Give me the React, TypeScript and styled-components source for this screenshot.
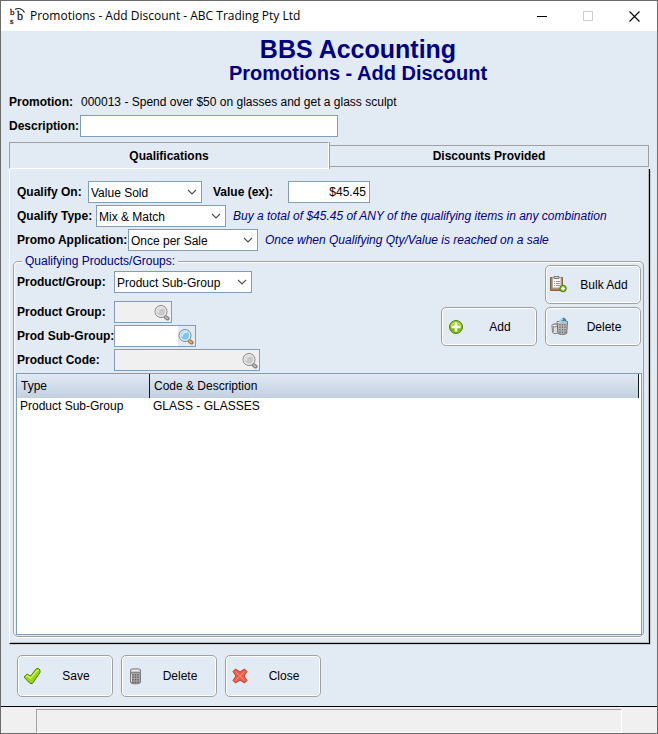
import React, { useState } from "react";
import styled, { createGlobalStyle, css } from "styled-components";

const face = "#e2eaf4";
const line = "#a0a0a0";
const fieldLine = "#7f9db9";
const navy = "#000080";

const GlobalStyle = createGlobalStyle`
  *, *::before, *::after { box-sizing: border-box; }
  body {
    margin: 0;
    background: ${face};
    color: #000;
    font: 12px/16px "Liberation Sans", Arial, sans-serif;
  }
  button, input, select { font: inherit; color: inherit; margin: 0; border-radius: 0; }
`;

const Window = styled.div`
  display: flex;
  flex-direction: column;
  min-height: 100vh;
  border: 1px solid #6b6b6b;
  background: ${face};
`;

const TitleBar = styled.header`
  display: flex;
  align-items: center;
  height: 30px;
  padding-left: 8px;
  background: #fff;
  font: 12px/16px "Open Sans", "Segoe UI", sans-serif;
`;

const TitleText = styled.span`
  flex: 1;
  padding-left: 4px;
  white-space: nowrap;
`;

const CaptionButton = styled.button`
  display: grid;
  place-items: center;
  width: 46px;
  height: 30px;
  padding: 0;
  border: 0;
  background: none;
`;

const Body = styled.main`
  display: flex;
  flex: 1;
  flex-direction: column;
  padding: 5px 7px 9px 8px;
`;

const Heading = styled.div`
  padding: 0 0 6px 57px;
  color: ${navy};
  text-align: center;
`;

const Company = styled.h1`
  margin: 0;
  font-size: 25px;
  line-height: 26px;
`;

const ScreenName = styled.h2`
  margin: 0;
  font-size: 20px;
  line-height: 22px;
`;

const Row = styled.div`
  display: flex;
  align-items: center;
  height: 24px;
`;

const Label = styled.label<{ $width: number }>`
  flex: none;
  width: ${(p) => p.$width}px;
  font-weight: bold;
  white-space: nowrap;
`;

const Output = styled.output`
  width: 328px;
  padding-left: 1px;
  overflow: hidden;
  white-space: nowrap;
`;

const TextInput = styled.input<{ $width: number; $right?: boolean }>`
  width: ${(p) => p.$width}px;
  height: 22px;
  padding: 0 3px;
  border: 1px solid ${fieldLine};
  background: #fff;
  text-align: ${(p) => (p.$right ? "right" : "left")};
  outline: none;
`;

const ValueField = styled.div`
  display: flex;
  align-items: center;
  padding-left: 11px;
`;

const Hint = styled.span`
  padding-left: 7px;
  color: ${navy};
  font-style: italic;
  white-space: nowrap;
`;

const TabList = styled.div`
  display: grid;
  grid-template-columns: 1fr 1fr;
  margin: 4px 1px 0 0;
`;

const Tab = styled.button<{ $active: boolean }>`
  padding: 0;
  border: 1px solid ${line};
  background: ${face};
  font-weight: bold;
  ${(p) =>
    p.$active
      ? css`
          height: 27px;
          border-right-color: #fff;
          border-bottom-color: #fff;
          box-shadow: 1px 0 ${line};
        `
      : css`
          height: 22px;
          margin-top: 3px;
        `}
`;

const Panel = styled.section`
  display: grid;
  flex: 1;
  grid-template-rows: auto 1fr;
  padding: 11px 3px 4px;
  border: 1px solid #000;
  border-top: 0;
  border-left-color: #fff;
  box-shadow: inset -1px -1px #b4b8bd, 1px 1px #c4c8c8;
`;

const PanelRows = styled.div`
  padding-left: 4px;
`;

const Group = styled.fieldset`
  display: grid;
  grid-template-rows: auto minmax(262px, 1fr);
  min-width: 0;
  margin: 5px 2px 2px 0;
  padding: 0 1px 1px 2px;
  border: 1px solid ${line};
  border-radius: 5px;
  box-shadow: inset 1px 1px #fff, 0 1px #fff;
`;

const Legend = styled.legend`
  margin-left: 6px;
  padding: 0 3px;
  background: ${face};
  color: ${navy};
  line-height: 8px;
`;

const GroupTop = styled.div`
  display: flex;
  justify-content: space-between;
`;

const GroupFields = styled.div`
  padding: 5px 0 1px 1px;
`;

const LookupFields = styled.div`
  padding-top: 6px;
`;

const ActionGrid = styled.div`
  display: grid;
  grid-template-columns: 96px 96px;
  align-content: start;
  gap: 3px 8px;
  padding-right: 1px;

  & > :first-child { grid-column: 2; }
`;

const ActionButton = styled.button<{ $tall?: boolean }>`
  display: grid;
  grid-template-columns: 16px 1fr;
  align-items: center;
  width: 96px;
  height: ${(p) => (p.$tall ? 42 : 39)}px;
  padding: 0 0 0 6px;
  border: 1px solid ${line};
  border-radius: 5px;
  background: ${face};
  box-shadow: inset 0 0 0 1px #fff;
  text-align: center;
`;

const SelectFrame = styled.span<{ $width: number }>`
  display: grid;
  grid-template-columns: 1fr 14px;
  align-items: center;
  width: ${(p) => p.$width}px;
  height: 22px;
  border: 1px solid ${fieldLine};
  background: #fff;

  & > select {
    grid-area: 1 / 1 / 2 / 3;
    width: 100%;
    height: 20px;
    padding: 1px 16px 0 2px;
    border: 0;
    background: none;
    appearance: none;
    outline: none;
  }
  & > svg { grid-area: 1 / 2; pointer-events: none; }
`;

const LookupFrame = styled.span<{ $width: number; $off?: boolean }>`
  display: flex;
  width: ${(p) => p.$width}px;
  height: 22px;
  border: 1px solid ${fieldLine};
  background: ${(p) => (p.$off ? "#f0f0f0" : "#fff")};

  & > input {
    flex: 1;
    min-width: 0;
    padding: 0 3px;
    border: 0;
    background: none;
    outline: none;
  }
  & > button {
    display: grid;
    align-items: center;
    justify-content: start;
    width: 17px;
    padding: 0;
    border: 0;
    background: ${(p) => (p.$off ? "none" : face)};
  }
`;

const GridFrame = styled.div`
  padding-right: 2px;
  overflow: auto;
  border: 1px solid ${fieldLine};
  background: #fff;
`;

const Grid = styled.table`
  width: 100%;
  border-collapse: separate;
  border-spacing: 0;
  table-layout: fixed;

  th {
    height: 24px;
    padding: 0 4px;
    border-right: 1px solid #101820;
    background: linear-gradient(#e1e9f3, #c1d0e0);
    font-weight: normal;
    text-align: left;
  }
  th:first-child { width: 133px; }
  td { height: 16px; padding: 0 3px; }
`;

const Footer = styled.div`
  display: flex;
  gap: 8px;
  padding: 11px 0 0 8px;
`;

const StatusBar = styled.footer`
  display: flex;
  height: 27px;
  padding: 2px 35px 0;
  border-top: 1px solid #000;
  background: #f0f0f0;
`;

const StatusCell = styled.div`
  flex: 1;
  border: 1px solid #fff;
  border-top-color: ${line};
  border-left-color: ${line};
`;

const Logo = () => (
  <svg width="17" height="22" viewBox="0 0 17 22" aria-hidden="true" fill="#222" stroke="#222" strokeWidth=".3" fontFamily="Liberation Serif, serif">
    <text x="1" y="10" fontSize="9">b</text>
    <text x="8" y="15" fontSize="12">b</text>
    <text x="1" y="19" fontSize="9">s</text>
    <path d="M6 4.500C9 2.500 13.500 3.500 15.500 7.500" fill="none" strokeWidth="1.200" />
  </svg>
);

const Chevron = () => (
  <svg width="10" height="6" viewBox="0 0 10 6" aria-hidden="true">
    <path d="M1 1l4 4 4-4" fill="none" stroke="#505050" strokeWidth="1.1" />
  </svg>
);

const SearchIcon = ({ off }: { off?: boolean }) => (
  <svg width="16" height="17" viewBox="0 0 16 17" aria-hidden="true">
    <path d="M11.500 13l2 1.500" stroke={off ? "#777" : "#9a6a30"} strokeWidth="4" strokeLinecap="round" />
    <path d="M11.500 13l2 1.500" stroke={off ? "#bbb" : "#eeb055"} strokeWidth="2" strokeLinecap="round" />
    <circle cx="7" cy="7.500" r="6" fill={off ? "#c8c8c8" : "#79c8ee"} stroke={off ? "#858585" : "#7d8c98"} />
    <circle cx="7" cy="7.500" r="4.800" fill="none" stroke="#ececec" strokeWidth="1.200" />
    <path d="M4 8.500c0-3 2-4.500 5-4.500" fill="none" stroke={off ? "#e5e5e5" : "#d4f3ff"} strokeWidth="1.600" />
  </svg>
);

const AddIcon = () => (
  <svg width="16" height="16" viewBox="0 0 16 16" aria-hidden="true">
    <circle cx="8" cy="8" r="6.500" fill="#7cbd08" stroke="#4c8510" />
    <path d="M2.500 7a5.600 5.600 0 0111 0c-3 1.500-8 1.500-11 0z" fill="#a4d93c" />
    <path d="M8 3.500v9M3.500 8h9" stroke="#fff" strokeWidth="2.600" />
  </svg>
);

const ClipboardAddIcon = () => (
  <svg width="17" height="17" viewBox="2 0 17 17" aria-hidden="true" overflow="visible">
    <path d="M.5 1.500h12v13H.5z" fill="#b08050" stroke="#8a6040" />
    <path d="M2.500 1.500h8.500v10.500H2.500z" fill="#f6f6f4" stroke="#aaa" />
    <path d="M4 .5h5v2H4z" fill="#ddd" stroke="#777" />
    <path d="M4 5.500h1m1 0h4M4 7.500h1m1 0h4M4 9.500h1m1 0h4" stroke="#999" />
    <circle cx="13" cy="12.500" r="3.300" fill="#75b90a" stroke="#4a8212" />
    <path d="M13 10.500v4M11 12.500h4" stroke="#fff" strokeWidth="1.300" />
  </svg>
);

const BinsIcon = () => (
  <svg width="17" height="17" viewBox="1 0 17 17" aria-hidden="true" overflow="visible">
    <path d="M1 7.500c0-2 6-2 6 0v7c0 1.500-5 1.500-5.500 0z" fill="#ddd" stroke="#7c7c7c" />
    <path d="M2.500 9v5" stroke="#999" />
    <ellipse cx="4" cy="7.500" rx="3" ry="1.300" fill="#f2f2f2" stroke="#888" />
    <path d="M6 3.500h10.500l-.8 12c-2 1.300-6.500 1.300-8.700 0z" fill="#b8b8b8" stroke="#707070" />
    <path d="M9 6v9M11.500 6v9M14 6v9" stroke="#6c6c6c" strokeWidth="1.200" strokeDasharray="1.500 1" />
    <path d="M9 4l1-3 3-1.500 2 2 1 3z" fill="#2d83c2" />
    <path d="M8 3l4-2" stroke="#a8d6ee" strokeWidth="1.500" />
    <path d="M6.500 4.500c2-1 8-1 9.500 0" fill="none" stroke="#eee" />
  </svg>
);

const TickIcon = () => (
  <svg width="17" height="17" viewBox="0 0 17 17" aria-hidden="true" overflow="visible">
    <path d="M0 9L3 6l3.500 2L12.500.5h2L16 2v2.500L8.500 15.500H6z" fill="#99d50c" stroke="#4d8315" strokeLinejoin="round" />
    <path d="M2 9l1.500-1.500 3 3L13 2.500l2 .5" fill="none" stroke="#cbf172" strokeWidth="1.200" />
  </svg>
);

const BinIcon = () => (
  <svg width="16" height="17" viewBox="0 0 16 17" aria-hidden="true">
    <path d="M2.500 3.500h10V14c0 2.500-10 2.500-10 0z" fill="#aaa" stroke="#777" />
    <path d="M2.500 1.500c1-1 9-1 10 0v3h-10z" fill="#c8c8c8" stroke="#858585" />
    <path d="M4 2.500h7" stroke="#eee" />
    <path d="M5 6v9M7.500 6v9M10 6v9" stroke="#5f5f5f" strokeWidth="1.500" strokeDasharray="1.500 1" />
    <path d="M3.500 6v8" stroke="#ddd" />
  </svg>
);

const CrossIcon = () => (
  <svg width="16" height="16" viewBox="0 0 16 16" aria-hidden="true" overflow="visible">
    <path d="M3.500 1L8 4 12.500 1 15 3.500 12 8l3 4.500-2.500 2.500L8 12l-4.500 3L1 12.500 4 8 1 3.500z" fill="#f2604a" stroke="#bd3929" strokeLinejoin="round" />
    <path d="M3.500 3.500l9 9M12.500 3.500l-9 9" stroke="#fa8a74" strokeWidth="1" />
  </svg>
);

type SelectProps = { id: string; width: number; options: string[] };

const Select = ({ id, width, options }: SelectProps) => (
  <SelectFrame $width={width}>
    <select id={id}>
      {options.map((o) => (
        <option key={o}>{o}</option>
      ))}
    </select>
    <Chevron />
  </SelectFrame>
);

type LookupProps = { id: string; label: string; width: number; off?: boolean };

const Lookup = ({ id, label, width, off }: LookupProps) => (
  <Row>
    <Label htmlFor={id} $width={97}>{label}</Label>
    <LookupFrame $width={width} $off={off}>
      <input id={id} disabled={off} />
      <button type="button" aria-label="Search" disabled={off}>
        <SearchIcon off={off} />
      </button>
    </LookupFrame>
  </Row>
);

const tabs = ["Qualifications", "Discounts Provided"];

export default function App() {
  const [tab, setTab] = useState(0);
  return (
    <>
      <GlobalStyle />
      <Window>
        <TitleBar>
          <Logo />
          <TitleText>Promotions - Add Discount - ABC Trading Pty Ltd</TitleText>
          <CaptionButton type="button" aria-label="Minimize">
            <svg width="11" height="11"><path d="M0 5.500h10" stroke="#000" /></svg>
          </CaptionButton>
          <CaptionButton type="button" aria-label="Maximize" disabled>
            <svg width="10" height="10"><path d="M.5.5h9v9h-9z" fill="none" stroke="#ccc" /></svg>
          </CaptionButton>
          <CaptionButton type="button" aria-label="Close window">
            <svg width="11" height="11"><path d="M.5.5l10 10M10.500.5l-10 10" stroke="#000" strokeWidth="1.100" /></svg>
          </CaptionButton>
        </TitleBar>

        <Body>
          <Heading>
            <Company>BBS Accounting</Company>
            <ScreenName>Promotions - Add Discount</ScreenName>
          </Heading>
          <Row>
            <Label as="span" $width={71}>Promotion:</Label>
            <Output>000013 - Spend over $50 on glasses and get a glass sculpt</Output>
          </Row>
          <Row>
            <Label htmlFor="description" $width={71}>Description:</Label>
            <TextInput id="description" $width={258} />
          </Row>

          <TabList role="tablist">
            {tabs.map((name, i) => (
              <Tab key={name} type="button" role="tab" aria-selected={tab === i} $active={tab === i} onClick={() => setTab(i)}>
                {name}
              </Tab>
            ))}
          </TabList>
          <Panel role="tabpanel">
            <PanelRows>
              <Row>
                <Label htmlFor="qualify-on" $width={71}>Qualify On:</Label>
                <Select id="qualify-on" width={114} options={["Value Sold", "Quantity Sold"]} />
                <ValueField>
                  <Label htmlFor="value-ex" $width={75}>Value (ex):</Label>
                  <TextInput id="value-ex" $width={82} $right defaultValue="$45.45" />
                </ValueField>
              </Row>
              <Row>
                <Label htmlFor="qualify-type" $width={79}>Qualify Type:</Label>
                <Select id="qualify-type" width={130} options={["Mix & Match"]} />
                <Hint>Buy a total of $45.45 of ANY of the qualifying items in any combination</Hint>
              </Row>
              <Row>
                <Label htmlFor="application" $width={111}>Promo Application:</Label>
                <Select id="application" width={130} options={["Once per Sale"]} />
                <Hint>Once when Qualifying Qty/Value is reached on a sale</Hint>
              </Row>
            </PanelRows>

            <Group>
              <Legend>Qualifying Products/Groups:</Legend>
              <GroupTop>
                <GroupFields>
                  <Row>
                    <Label htmlFor="product-or-group" $width={97}>Product/Group:</Label>
                    <Select id="product-or-group" width={138} options={["Product Sub-Group", "Product Group", "Product"]} />
                  </Row>
                  <LookupFields>
                    <Lookup id="product-group" label="Product Group:" width={58} off />
                    <Lookup id="sub-group" label="Prod Sub-Group:" width={82} />
                    <Lookup id="product-code" label="Product Code:" width={146} off />
                  </LookupFields>
                </GroupFields>
                <ActionGrid>
                  <ActionButton type="button"><ClipboardAddIcon />Bulk Add</ActionButton>
                  <ActionButton type="button"><AddIcon />Add</ActionButton>
                  <ActionButton type="button"><BinsIcon />Delete</ActionButton>
                </ActionGrid>
              </GroupTop>
              <GridFrame>
                <Grid>
                  <thead>
                    <tr><th scope="col">Type</th><th scope="col">Code &amp; Description</th></tr>
                  </thead>
                  <tbody>
                    <tr><td>Product Sub-Group</td><td>GLASS - GLASSES</td></tr>
                  </tbody>
                </Grid>
              </GridFrame>
            </Group>
          </Panel>

          <Footer>
            <ActionButton type="button" $tall><TickIcon />Save</ActionButton>
            <ActionButton type="button" $tall><BinIcon />Delete</ActionButton>
            <ActionButton type="button" $tall><CrossIcon />Close</ActionButton>
          </Footer>
        </Body>
        <StatusBar><StatusCell role="status" /></StatusBar>
      </Window>
    </>
  );
}
